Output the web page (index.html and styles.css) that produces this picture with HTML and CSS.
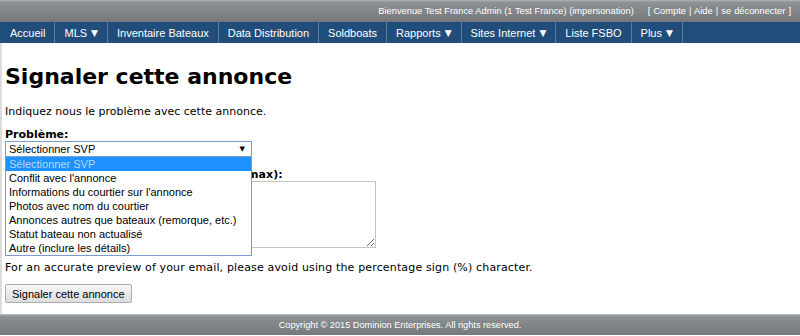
FILE: index.html
```html
<!DOCTYPE html>
<html lang="fr">

<head>
    <meta charset="UTF-8">
    <title>Signaler cette annonce</title>
    <link rel="stylesheet" href="styles.css">
</head>

<body>
    <div id="page">
        <div id="topBar">
            <span class="welcome">Bienvenue Test France Admin (1 Test France) (impersonation)</span>
            <span class="userLinks">[ <a href="#">Compte</a> | <a href="#">Aide</a> | <a href="#">se déconnecter</a> ]</span>
        </div>

        <ul id="mainNav">
            <li><a href="#">Accueil</a></li>
            <li><a href="#">MLS <span class="caret">&#9660;</span></a></li>
            <li><a href="#">Inventaire Bateaux</a></li>
            <li><a href="#">Data Distribution</a></li>
            <li><a href="#">Soldboats</a></li>
            <li><a href="#">Rapports <span class="caret">&#9660;</span></a></li>
            <li><a href="#">Sites Internet <span class="caret">&#9660;</span></a></li>
            <li><a href="#">Liste FSBO</a></li>
            <li><a href="#">Plus <span class="caret">&#9660;</span></a></li>
        </ul>

        <div id="content">
            <h1>Signaler cette annonce</h1>
            <p class="intro">Indiquez nous le problème avec cette annonce.</p>

            <form id="reportForm">
                <label class="fieldLabel">Problème:</label>
                <div class="selectWrap">
                    <div class="selectBox">
                        <span>Sélectionner SVP</span>
                        <span class="selectArrow">&#9660;</span>
                    </div>
                    <ul class="selectList">
                        <li class="active">Sélectionner SVP</li>
                        <li>Conflit avec l'annonce</li>
                        <li>Informations du courtier sur l'annonce</li>
                        <li>Photos avec nom du courtier</li>
                        <li>Annonces autres que bateaux (remorque, etc.)</li>
                        <li>Statut bateau non actualisé</li>
                        <li>Autre (inclure les détails)</li>
                    </ul>
                </div>

                <label class="fieldLabel commentLabel">Détails du problème (1000 caractères max):</label>
                <textarea id="comments"></textarea>

                <p class="note">For an accurate preview of your email, please avoid using the percentage sign (%) character.</p>

                <button type="button" id="submitReport">Signaler cette annonce</button>
            </form>
        </div>

        <div id="footer">Copyright &copy; 2015 Dominion Enterprises. All rights reserved.</div>
    </div>
</body>

</html>
```

FILE: styles.css
```css
body {
    margin: 0;
    background-color: white;
    color: black;
    font-family: "DejaVu Sans", Verdana, sans-serif;
    font-size: 11px;
}

#topBar {
    height: 22px;
    display: flex;
    justify-content: flex-end;
    align-items: center;
    gap: 14px;
    padding-right: 9px;
    background: linear-gradient(#b4b6b8 0, #8f9295 2px, #74787b 100%);
    color: white;
    font-family: "Liberation Sans", Arial, sans-serif;
    font-size: 9.3px;
}

#topBar a {
    color: white;
    text-decoration: none;
}

#topBar .userLinks {
    word-spacing: 0.5px;
}

#mainNav {
    list-style: none;
    margin: 0;
    padding: 0 0 0 1px;
    height: 21px;
    display: flex;
    background-color: #214d7b;
    font-family: "Liberation Sans", Arial, sans-serif;
    font-size: 11px;
}

#mainNav li {
    display: flex;
    border-right: 1px solid #5a7ca1;
}

#mainNav a {
    display: flex;
    align-items: center;
    gap: 4px;
    padding: 0 9px;
    color: white;
    text-decoration: none;
}

#mainNav .caret {
    font-family: "DejaVu Sans", sans-serif;
    font-size: 9px;
}

#content {
    padding: 0 3px 11px;
    border-left: 2px solid #dcdcdc;
}

h1 {
    margin: 0;
    padding-top: 21px;
    font-size: 22px;
    line-height: 26px;
    font-weight: bold;
}

.intro {
    margin: 15px 0 0;
    line-height: 14px;
}

#reportForm {
    margin-top: 9px;
}

.fieldLabel {
    display: block;
    font-weight: bold;
    line-height: 13px;
}

.selectWrap {
    position: relative;
    width: 247px;
}

.selectBox {
    height: 14px;
    display: flex;
    justify-content: space-between;
    align-items: center;
    padding: 0 6px 0 3px;
    border: 1px solid #7c9ccc;
    font-family: "Liberation Sans", Arial, sans-serif;
    font-size: 11px;
}

.selectArrow {
    font-family: "DejaVu Sans", sans-serif;
    font-size: 7px;
}

.selectList {
    position: absolute;
    top: 16px;
    left: 0;
    width: 245px;
    margin: 0;
    padding: 0;
    list-style: none;
    background-color: white;
    border: 1px solid #7c9ccc;
    border-top: none;
    font-family: "Liberation Sans", Arial, sans-serif;
    font-size: 11px;
    z-index: 2;
}

.selectList li {
    height: 14px;
    line-height: 14px;
    padding-left: 3px;
}

.selectList li.active {
    background-color: #1e90ff;
    color: #b9d7f5;
}

.commentLabel {
    margin-top: 11px;
    letter-spacing: 0.1px;
}

#comments {
    display: block;
    width: 369px;
    height: 65px;
    margin: 0;
    padding: 0;
    border: 1px solid #c4c4c4;
    resize: both;
}

.note {
    margin: 13px 0 0;
    line-height: 14px;
    letter-spacing: 0.15px;
}

#submitReport {
    margin: 9px 0 0;
    padding: 0 6px;
    height: 19px;
    background: linear-gradient(#f6f6f6, #dddddd);
    color: black;
    border: 1px solid #acacac;
    border-radius: 2px;
    font-family: "Liberation Sans", Arial, sans-serif;
    font-size: 11px;
}

#footer {
    height: 21px;
    display: flex;
    justify-content: center;
    align-items: center;
    background: linear-gradient(#c2c4c6 0, #a2a5a8 1px, #8b8f92 3px, #74797c 100%);
    color: white;
    font-family: "Liberation Sans", Arial, sans-serif;
    font-size: 9.2px;
}
```
